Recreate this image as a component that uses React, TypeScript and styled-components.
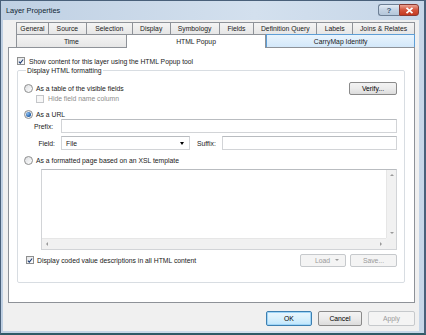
import React, { FC } from "react";
import styled, { createGlobalStyle, css } from "styled-components";

const GlobalStyle = createGlobalStyle`
  html, body {
    margin: 0;
    padding: 0;
    background: #ffffff;
  }
  body {
    font-family: "Liberation Sans", Arial, sans-serif;
    font-size: 6.8px;
    color: #1a1a1a;
  }
`;

const row1 = [
  { label: "General", w: 33 },
  { label: "Source", w: 38 },
  { label: "Selection", w: 46 },
  { label: "Display", w: 38 },
  { label: "Symbology", w: 49 },
  { label: "Fields", w: 35 },
  { label: "Definition Query", w: 63 },
  { label: "Labels", w: 36 },
  { label: "Joins & Relates", w: 62 },
];

const row2 = [
  { label: "Time", w: 111, state: "normal" },
  { label: "HTML Popup", w: 140, state: "active" },
  { label: "CarryMap Identify", w: 149, state: "hover" },
];

const Check: FC<{ checked?: boolean; disabled?: boolean }> = ({ checked, disabled }) => (
  <CheckBox $disabled={disabled}>
    {checked && (
      <svg width="7" height="7" viewBox="0 0 7 7">
        <path d="M1 3.6 L2.7 5.4 L6 1.2" fill="none" stroke="#1d3c74" strokeWidth="1.3" />
      </svg>
    )}
  </CheckBox>
);

const Radio: FC<{ selected?: boolean }> = ({ selected }) => (
  <RadioCircle>{selected && <RadioDot />}</RadioCircle>
);

const App: FC = () => {
  return (
    <>
      <GlobalStyle />
      <Window>
        <TitleBar>
          <Title>Layer Properties</Title>
          <Caption>
            <HelpButton>?</HelpButton>
            <CloseButton>
              <svg width="9" height="7" viewBox="0 0 9 7">
                <path d="M1.5 0.8 L7.5 6.2 M7.5 0.8 L1.5 6.2" stroke="#ffffff" strokeWidth="1.8" />
              </svg>
            </CloseButton>
          </Caption>
        </TitleBar>

        <Client>
          <TabRows>
            <TabRow $h={12}>
              {row1.map((t) => (
                <Tab key={t.label} $w={t.w}>
                  {t.label}
                </Tab>
              ))}
            </TabRow>
            <TabRow $h={13}>
              {row2.map((t) => (
                <Tab key={t.label} $w={t.w} $state={t.state}>
                  {t.label}
                </Tab>
              ))}
            </TabRow>
          </TabRows>

          <Panel>
            <CheckRow>
              <Check checked />
              <span>Show content for this layer using the HTML Popup tool</span>
            </CheckRow>

            <Group>
              <Legend>Display HTML formatting</Legend>

              <SplitRow $mt={7} $h={12}>
                <OptionRow>
                  <Radio />
                  <span>As a table of the visible fields</span>
                </OptionRow>
                <Button $w={48}>Verify...</Button>
              </SplitRow>

              <SubOption>
                <Check disabled />
                <DimText>Hide field name column</DimText>
              </SubOption>

              <OptionRow $mt={6}>
                <Radio selected />
                <span>As a URL</span>
              </OptionRow>

              <FieldGrid>
                <FieldLabel>Prefix:</FieldLabel>
                <TextInput />
                <FieldLabel $right>Field:</FieldLabel>
                <FieldLine>
                  <Combo>
                    <span>File</span>
                    <ComboArrow />
                  </Combo>
                  <SuffixLabel>Suffix:</SuffixLabel>
                  <TextInput />
                </FieldLine>
              </FieldGrid>

              <OptionRow $mt={5}>
                <Radio />
                <span>As a formatted page based on an XSL template</span>
              </OptionRow>

              <Editor>
                <EditorBody />
                <VScroll>
                  <Arrow $dir="up" />
                  <Arrow $dir="down" />
                </VScroll>
                <HScroll>
                  <Arrow $dir="left" />
                  <Arrow $dir="right" />
                </HScroll>
                <ScrollCorner />
              </Editor>

              <SplitRow $mt={3} $h={14}>
                <CodedRow>
                  <Check checked />
                  <span>Display coded value descriptions in all HTML content</span>
                </CodedRow>
                <ButtonPair>
                  <Button $w={46} $disabled $split>
                    <span>Load</span>
                    <SmallArrow />
                  </Button>
                  <Button $w={47} $disabled>
                    Save...
                  </Button>
                </ButtonPair>
              </SplitRow>
            </Group>
          </Panel>

          <Footer>
            <Button $w={46} $h={15} $default>
              OK
            </Button>
            <Button $w={44} $h={15}>
              Cancel
            </Button>
            <Button $w={47} $h={15} $disabled>
              Apply
            </Button>
          </Footer>
        </Client>
      </Window>
    </>
  );
};

const Window = styled.div`
  box-sizing: border-box;
  width: 426px;
  height: 335px;
  display: flex;
  flex-direction: column;
  padding: 0 5px 2px 2px;
  background: linear-gradient(to right, #bfd0e3, #d3e0ee 60%, #c6d6e8);
  border: 1px solid #49607a;
  border-right-width: 2px;
  border-bottom: 2px solid #2f5a66;
`;

const TitleBar = styled.div`
  height: 19px;
  display: flex;
  align-items: center;
  justify-content: space-between;
  padding-left: 3px;
`;

const Title = styled.div`
  font-size: 7.4px;
  color: #0f1f33;
`;

const Caption = styled.div`
  display: flex;
  align-self: flex-start;
  margin-top: 3px;
`;

const captionBase = css`
  box-sizing: border-box;
  height: 12px;
  display: flex;
  align-items: center;
  justify-content: center;
  border: 1px solid #6d7f95;
`;

const HelpButton = styled.div`
  ${captionBase};
  width: 21px;
  border-radius: 3px 0 0 3px;
  border-right: none;
  background: linear-gradient(#e4ecf5, #c3d2e3 50%, #b4c6da);
  color: #415a78;
  font-size: 8px;
  font-weight: bold;
`;

const CloseButton = styled.div`
  ${captionBase};
  width: 20px;
  border-radius: 0 3px 3px 0;
  border-color: #8a3a32;
  background: linear-gradient(#eba494, #d4543c 50%, #c4391f);
`;

const Client = styled.div`
  flex: 1;
  display: flex;
  flex-direction: column;
  background: #f0f0f0;
  padding: 2px 4px 0 5px;
`;

const TabRows = styled.div`
  display: flex;
  flex-direction: column;
  margin-left: 8px;
`;

const TabRow = styled.div<{ $h: number }>`
  display: flex;
  height: ${(p) => p.$h}px;
`;

const Tab = styled.div<{ $w: number; $state?: string }>`
  box-sizing: border-box;
  width: ${(p) => p.$w}px;
  display: flex;
  align-items: center;
  justify-content: center;
  border: 1px solid #8e9298;
  border-left: none;
  border-bottom: none;
  background: linear-gradient(#f4f4f4, #e6e6e6);
  white-space: nowrap;
  &:first-child {
    border-left: 1px solid #8e9298;
  }
  ${(p) =>
    p.$state === "active" &&
    css`
      background: #ffffff;
      position: relative;
      z-index: 1;
      height: calc(100% + 1px);
    `}
  ${(p) =>
    p.$state === "hover" &&
    css`
      background: linear-gradient(#e9f4fd, #d3e8fa);
      border: 1px solid #5d9ed6;
      border-bottom: none;
    `}
`;

const Panel = styled.div`
  box-sizing: border-box;
  height: 256px;
  background: #ffffff;
  border: 1px solid #8e9298;
  padding: 8px 9px 0 8px;
  display: flex;
  flex-direction: column;
`;

const CheckRow = styled.div`
  display: flex;
  align-items: center;
  gap: 4px;
  height: 10px;
`;

const CheckBox = styled.div<{ $disabled?: boolean }>`
  box-sizing: border-box;
  width: 8px;
  height: 8px;
  flex: none;
  display: flex;
  align-items: center;
  justify-content: center;
  border: 1px solid ${(p) => (p.$disabled ? "#c4c6c9" : "#8e8f8f")};
  background: ${(p) => (p.$disabled ? "#f7f7f7" : "linear-gradient(135deg, #e3e4e6, #ffffff)")};
`;

const RadioCircle = styled.div`
  box-sizing: border-box;
  width: 9px;
  height: 9px;
  flex: none;
  border-radius: 50%;
  border: 1px solid #8e8f8f;
  background: linear-gradient(135deg, #dcdde0, #ffffff);
  display: flex;
  align-items: center;
  justify-content: center;
`;

const RadioDot = styled.div`
  width: 5px;
  height: 5px;
  border-radius: 50%;
  background: radial-gradient(circle at 35% 35%, #8ec0f0, #1d5ca8 70%);
`;

const Group = styled.fieldset`
  margin: 0;
  padding: 0 7px 15px 6px;
  border: 1px solid #d8dde2;
  border-radius: 2px;
  display: flex;
  flex-direction: column;
  min-width: 0;
`;

const Legend = styled.legend`
  padding: 0 1px;
  margin-left: 2px;
  line-height: 9px;
`;

const SplitRow = styled.div<{ $mt: number; $h: number }>`
  display: flex;
  align-items: center;
  justify-content: space-between;
  margin-top: ${(p) => p.$mt}px;
  height: ${(p) => p.$h}px;
`;

const OptionRow = styled.div<{ $mt?: number }>`
  display: flex;
  align-items: center;
  gap: 3px;
  height: 10px;
  margin-top: ${(p) => p.$mt ?? 0}px;
`;

const SubOption = styled.div`
  display: flex;
  align-items: center;
  gap: 4px;
  height: 9px;
  margin-left: 12px;
`;

const DimText = styled.span`
  color: #8d8d8d;
`;

const FieldGrid = styled.div`
  display: grid;
  grid-template-columns: 27px 1fr;
  grid-template-rows: 14px 14px;
  row-gap: 3px;
  padding-left: 10px;
`;

const FieldLabel = styled.div<{ $right?: boolean }>`
  display: flex;
  align-items: center;
  justify-content: ${(p) => (p.$right ? "flex-end" : "flex-start")};
  padding-right: ${(p) => (p.$right ? "6px" : "0")};
`;

const TextInput = styled.div`
  box-sizing: border-box;
  flex: 1;
  border: 1px solid #d2d4d7;
  border-top-color: #b9bcc0;
  background: #ffffff;
  height: 14px;
`;

const FieldLine = styled.div`
  display: flex;
  align-items: center;
`;

const Combo = styled.div`
  box-sizing: border-box;
  width: 129px;
  height: 14px;
  display: flex;
  align-items: center;
  justify-content: space-between;
  padding: 0 5px 0 4px;
  border: 1px solid #d2d4d7;
  border-top-color: #b9bcc0;
`;

const ComboArrow = styled.div`
  width: 0;
  height: 0;
  border-left: 2.5px solid transparent;
  border-right: 2.5px solid transparent;
  border-top: 3px solid #000000;
`;

const SuffixLabel = styled.span`
  margin: 0 6px 0 7px;
`;

const Editor = styled.div`
  box-sizing: border-box;
  margin: 4px 0 0 17px;
  height: 81px;
  border: 1px solid #d2d4d7;
  border-top-color: #b9bcc0;
  display: grid;
  grid-template-columns: 1fr 10px;
  grid-template-rows: 1fr 11px;
`;

const EditorBody = styled.div`
  background: #ffffff;
`;

const VScroll = styled.div`
  background: #f1f1f1;
  border-left: 1px solid #e6e6e6;
  display: flex;
  flex-direction: column;
  justify-content: space-between;
  align-items: center;
  padding: 4px 0;
`;

const HScroll = styled.div`
  background: #f1f1f1;
  border-top: 1px solid #e6e6e6;
  display: flex;
  justify-content: space-between;
  align-items: center;
  padding: 0 4px;
`;

const ScrollCorner = styled.div`
  background: #f0f0f0;
`;

const Arrow = styled.div<{ $dir: "up" | "down" | "left" | "right" }>`
  width: 0;
  height: 0;
  ${(p) =>
    p.$dir === "up" &&
    css`
      border-left: 2px solid transparent;
      border-right: 2px solid transparent;
      border-bottom: 2px solid #9a9a9a;
    `}
  ${(p) =>
    p.$dir === "down" &&
    css`
      border-left: 2px solid transparent;
      border-right: 2px solid transparent;
      border-top: 2px solid #9a9a9a;
    `}
  ${(p) =>
    p.$dir === "left" &&
    css`
      border-top: 2px solid transparent;
      border-bottom: 2px solid transparent;
      border-right: 2px solid #9a9a9a;
    `}
  ${(p) =>
    p.$dir === "right" &&
    css`
      border-top: 2px solid transparent;
      border-bottom: 2px solid transparent;
      border-left: 2px solid #9a9a9a;
    `}
`;

const CodedRow = styled.div`
  display: flex;
  align-items: center;
  gap: 3px;
  margin-left: 2px;
`;

const ButtonPair = styled.div`
  display: flex;
  gap: 4px;
`;

const SmallArrow = styled.div`
  width: 0;
  height: 0;
  border-left: 2px solid transparent;
  border-right: 2px solid transparent;
  border-top: 2px solid #9a9a9a;
`;

const Button = styled.div<{
  $w: number;
  $h?: number;
  $disabled?: boolean;
  $default?: boolean;
  $split?: boolean;
}>`
  box-sizing: border-box;
  width: ${(p) => p.$w}px;
  height: ${(p) => p.$h ?? 13}px;
  display: flex;
  align-items: center;
  justify-content: ${(p) => (p.$split ? "space-between" : "center")};
  padding: ${(p) => (p.$split ? "0 6px 0 14px" : "0")};
  border: 1px solid #8a8a8a;
  border-radius: 2px;
  background: linear-gradient(#f3f3f3, #ebebeb 50%, #dcdcdc);
  color: #000000;
  ${(p) =>
    p.$disabled &&
    css`
      border-color: #c6c9cc;
      background: #f4f4f4;
      color: #9a9a9a;
    `}
  ${(p) =>
    p.$default &&
    css`
      border-color: #3c7fb1;
      background: linear-gradient(#eaf6fd, #d9f0fc 50%, #bee6fd);
      box-shadow: inset 0 0 0 1px #9fd5f7;
    `}
`;

const Footer = styled.div`
  display: flex;
  justify-content: flex-end;
  gap: 6px;
  padding: 8px 0 0;
`;

export default App;
